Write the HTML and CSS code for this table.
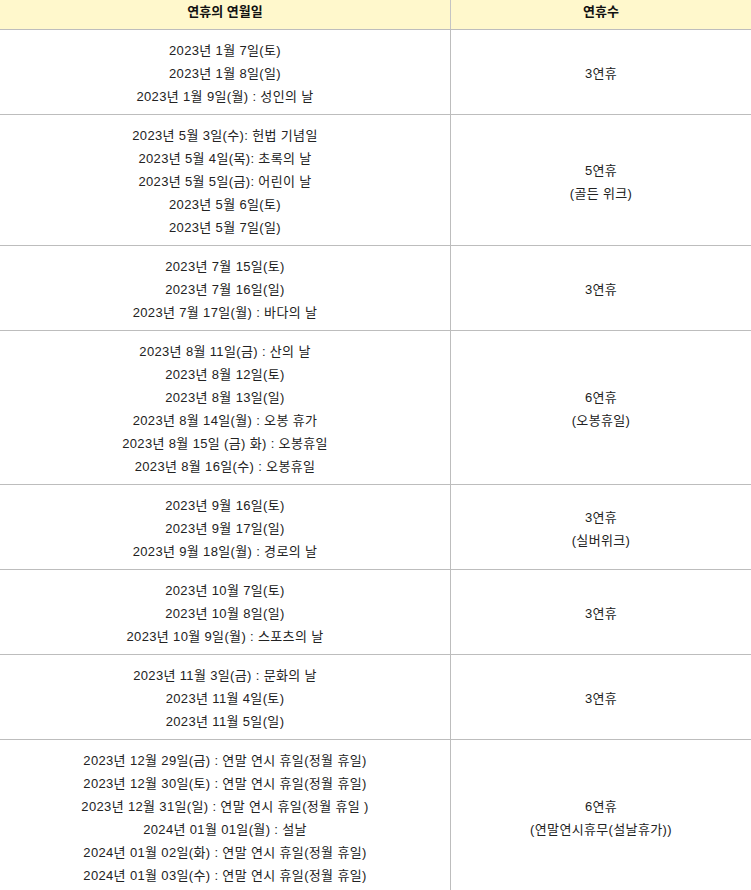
FILE: index.html
```html
<!DOCTYPE html>
<html lang="ko">
<head>
<meta charset="utf-8">
<link rel="stylesheet" href="styles.css">
</head>
<body>
<table class="holidays">
  <thead>
    <tr><th class="col-date">연휴의 연월일</th><th class="col-count">연휴수</th></tr>
  </thead>
  <tbody>
    <tr>
      <td>2023년 1월 7일(토)<br>2023년 1월 8일(일)<br>2023년 1월 9일(월) : 성인의 날</td>
      <td>3연휴</td>
    </tr>
    <tr>
      <td>2023년 5월 3일(수): 헌법 기념일<br>2023년 5월 4일(목): 초록의 날<br>2023년 5월 5일(금): 어린이 날<br>2023년 5월 6일(토)<br>2023년 5월 7일(일)</td>
      <td>5연휴<br>(골든 위크)</td>
    </tr>
    <tr>
      <td>2023년 7월 15일(토)<br>2023년 7월 16일(일)<br>2023년 7월 17일(월) : 바다의 날</td>
      <td>3연휴</td>
    </tr>
    <tr>
      <td>2023년 8월 11일(금) : 산의 날<br>2023년 8월 12일(토)<br>2023년 8월 13일(일)<br>2023년 8월 14일(월) : 오봉 휴가<br>2023년 8월 15일 (금) 화) : 오봉휴일<br>2023년 8월 16일(수) : 오봉휴일</td>
      <td>6연휴<br>(오봉휴일)</td>
    </tr>
    <tr>
      <td>2023년 9월 16일(토)<br>2023년 9월 17일(일)<br>2023년 9월 18일(월) : 경로의 날</td>
      <td>3연휴<br>(실버위크)</td>
    </tr>
    <tr>
      <td>2023년 10월 7일(토)<br>2023년 10월 8일(일)<br>2023년 10월 9일(월) : 스포츠의 날</td>
      <td>3연휴</td>
    </tr>
    <tr>
      <td>2023년 11월 3일(금) : 문화의 날<br>2023년 11월 4일(토)<br>2023년 11월 5일(일)</td>
      <td>3연휴</td>
    </tr>
    <tr>
      <td>2023년 12월 29일(금) : 연말 연시 휴일(정월 휴일)<br>2023년 12월 30일(토) : 연말 연시 휴일(정월 휴일)<br>2023년 12월 31일(일) : 연말 연시 휴일(정월 휴일 )<br>2024년 01월 01일(월) : 설날<br>2024년 01월 02일(화) : 연말 연시 휴일(정월 휴일)<br>2024년 01월 03일(수) : 연말 연시 휴일(정월 휴일)</td>
      <td>6연휴<br>(연말연시휴무(설날휴가))</td>
    </tr>
  </tbody>
</table>
</body>
</html>
```

FILE: styles.css
```css
html, body {
  margin: 0;
  padding: 0;
  background: #fff;
}

.holidays {
  width: 751px;
  border-collapse: collapse;
  table-layout: fixed;
  font-family: "Liberation Sans", "Noto Sans CJK KR", sans-serif;
  font-size: 13px;
  letter-spacing: 0.35px;
  color: #222;
}

.col-date {
  width: 450px;
}

.holidays th {
  background: #fff8cc;
  height: 29px;
  padding: 0;
  font-size: 13px;
  font-weight: bold;
  letter-spacing: 0;
  color: #111;
  text-align: center;
  vertical-align: top;
  line-height: 24px;
  border-bottom: 1px solid #bdbdbd;
  border-left: 1px solid #c4c4c4;
}

.holidays td {
  text-align: center;
  vertical-align: middle;
  padding: 9px 0 6px;
  line-height: 23px;
  border-bottom: 1px solid #bdbdbd;
  border-left: 1px solid #bdbdbd;
}

.holidays th:first-child,
.holidays td:first-child {
  border-left: none;
}
```
